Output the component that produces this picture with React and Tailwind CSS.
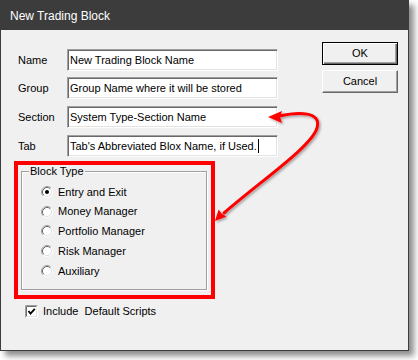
import React from 'react'

const font = { fontFamily: '"Liberation Sans", Arial, sans-serif' }

const fields = [
    { label: 'Name', value: 'New Trading Block Name', mt: 'mt-[19px]' },
    { label: 'Group', value: 'Group Name where it will be stored', mt: 'mt-[6px]' },
    { label: 'Section', value: 'System Type-Section Name', mt: 'mt-[7px]' },
    { label: 'Tab', value: "Tab's Abbreviated Blox Name, if Used.", mt: 'mt-[7px]', caret: true },
]

const types = ['Entry and Exit', 'Money Manager', 'Portfolio Manager', 'Risk Manager', 'Auxiliary']

const Radio = ({ checked }) => (
    <svg width="12" height="12" viewBox="0 0 12 12" className="shrink-0">
        <circle cx="6" cy="6" r="4.5" fill="#fff" />
        <path d="M2.11 9.89 A5.5 5.5 0 0 1 9.89 2.11" stroke="#a0a0a0" fill="none" />
        <path d="M9.89 2.11 A5.5 5.5 0 0 1 2.11 9.89" stroke="#fff" fill="none" />
        <path d="M2.82 9.18 A4.5 4.5 0 0 1 9.18 2.82" stroke="#696969" fill="none" />
        <path d="M9.18 2.82 A4.5 4.5 0 0 1 2.82 9.18" stroke="#e3e3e3" fill="none" />
        {checked && <circle cx="6" cy="6" r="2" fill="#000" />}
    </svg>
)

const Field = ({ label, value, mt, caret }) => (
    <div className={`flex items-center pl-[4px] ${mt}`}>
        <span className="w-[49px] text-[11px] text-black">{label}</span>
        <div className="flex h-[22px] w-[211px] items-center border border-t-[#a0a0a0] border-l-[#a0a0a0] border-r-white border-b-white bg-white pl-[2px] text-[11px] text-black shadow-[inset_1px_1px_0_#696969,inset_-1px_-1px_0_#e3e3e3]">
            <span className="whitespace-nowrap">{value}</span>
            {caret && <span className="ml-px h-[14px] w-px bg-black" />}
        </div>
    </div>
)

export default function App() {
    return (
        <div className="relative h-[360px] w-[418px] bg-white" style={font}>
            <div className="flex h-[351px] w-[409px] flex-col border border-[#3c3c3c] bg-[#f0f0f0] shadow-[5px_5px_6px_rgba(0,0,0,0.45)]">
                {/* Title bar */}
                <div className="flex h-[29px] items-center bg-[#3c3c3c] pl-[9px] text-[12px] text-white">
                    New Trading Block
                </div>

                <div className="flex flex-1">
                    {/* Left column */}
                    <div className="flex flex-col pl-[13px]">
                        {fields.map((f) => (
                            <Field key={f.label} {...f} />
                        ))}

                        <div className="mt-[4px] h-[138px] w-[201px] border-4 border-[#ff0000] pl-[3px] pt-[6px]">
                            <div className="relative h-[119px] w-[186px] border border-[#a0a0a0] pl-[19px] pt-[10px] shadow-[inset_1px_1px_0_#fff,1px_1px_0_#fff]">
                                <span className="absolute -top-[7px] left-[7px] bg-[#f0f0f0] px-[1px] text-[11px] leading-[13px] text-black">
                                    Block Type
                                </span>
                                {types.map((t, i) => (
                                    <div key={t} className="flex h-[19.75px] items-center gap-[5px] text-[11px] text-black">
                                        <Radio checked={i === 0} />
                                        <span>{t}</span>
                                    </div>
                                ))}
                            </div>
                        </div>

                        <div className="ml-[11px] mt-[4px] flex items-center gap-[5px] text-[11px] text-black">
                            <svg width="13" height="13" viewBox="0 0 13 13" className="shrink-0">
                                <rect x="0" y="0" width="13" height="13" fill="#fff" />
                                <path d="M0.5 12.5 V0.5 H12.5" stroke="#a0a0a0" fill="none" />
                                <path d="M1.5 11.5 V1.5 H11.5" stroke="#696969" fill="none" />
                                <path d="M1.5 11.5 H11.5 V1.5" stroke="#e3e3e3" fill="none" />
                                <polyline points="3.5,6 5.5,8.5 9.8,3.8" stroke="#000" strokeWidth="1.8" fill="none" />
                            </svg>
                            <span className="whitespace-pre">Include  Default Scripts</span>
                        </div>
                    </div>

                    {/* Buttons */}
                    <div className="ml-auto mr-[10px] mt-[12px] flex flex-col gap-[5px]">
                        <button className="h-[23px] w-[76px] border border-black bg-[#f0f0f0] text-[11px] text-black shadow-[inset_1px_1px_0_#fff,inset_-1px_-1px_0_#696969,inset_-2px_-2px_0_#a0a0a0]">
                            OK
                        </button>
                        <button className="h-[23px] w-[76px] border border-t-white border-l-white border-r-[#696969] border-b-[#696969] bg-[#f0f0f0] text-[11px] text-black shadow-[inset_-1px_-1px_0_#a0a0a0]">
                            Cancel
                        </button>
                    </div>
                </div>
            </div>

            {/* Annotation arrow */}
            <svg width="418" height="360" className="pointer-events-none absolute left-0 top-0">
                <defs>
                    <filter id="sh" x="-10%" y="-10%" width="130%" height="130%">
                        <feDropShadow dx="1.5" dy="1.5" stdDeviation="1" floodColor="#000" floodOpacity="0.35" />
                    </filter>
                </defs>
                <g filter="url(#sh)">
                    <path d="M279 116 C298 112 322 111 317 128 C312 146 262 180 224 213" stroke="#ff0000" strokeWidth="3" fill="none" strokeLinecap="round" />
                    <polygon points="268,117 282,111 280,117 282,123" fill="#ff0000" />
                    <polygon points="215,221 218.6,209.5 222,214 226.5,216.5" fill="#ff0000" />
                </g>
            </svg>
        </div>
    )
}
